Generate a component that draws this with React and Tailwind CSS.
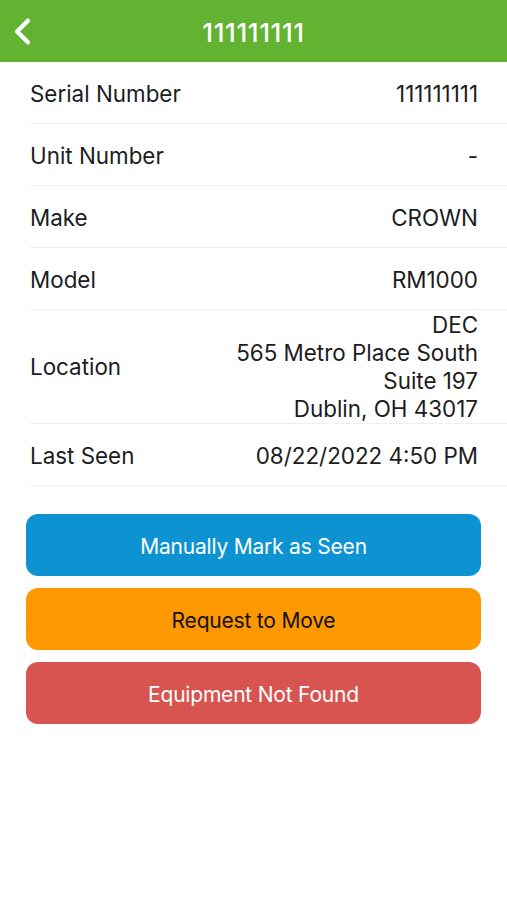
import { ChevronLeft } from 'lucide-react';

const rows = [
  { label: 'Serial Number', value: ['111111111'] },
  { label: 'Unit Number', value: ['-'] },
  { label: 'Make', value: ['CROWN'] },
  { label: 'Model', value: ['RM1000'] },
  { label: 'Location', value: ['DEC', '565 Metro Place South', 'Suite 197', 'Dublin, OH 43017'] },
  { label: 'Last Seen', value: ['08/22/2022 4:50 PM'] },
];

const buttons = [
  { text: 'Manually Mark as Seen', cls: 'bg-[#0d93d2] text-white' },
  { text: 'Request to Move', cls: 'bg-[#fe9800] text-[#111]' },
  { text: 'Equipment Not Found', cls: 'bg-[#d75450] text-white' },
];

export default function App() {
  return (
    <div className="w-[507px] h-[900px] bg-white font-['Inter',sans-serif] text-[#1c1c1e]">
      {/* Header */}
      <div className="relative h-[62px] bg-[#62b332] flex items-center justify-center">
        <ChevronLeft className="absolute left-[1px] top-[10px] text-white" size={43} strokeWidth={2.5} />
        <span className="text-white text-[26px] font-medium tracking-[0.6px] pt-[2px]">111111111</span>
      </div>

      {/* Details */}
      <div className="pl-[30px]">
        {rows.map((r) => (
          <div
            key={r.label}
            className={`flex items-center justify-between min-h-[62px] border-b border-[#efeff1] pr-[29px] text-[22.4px] ${
              r.value.length === 1 ? 'pt-[3px]' : 'pt-[1px]'
            }`}
          >
            <span>{r.label}</span>
            <div className="text-right leading-[28px]">
              {r.value.map((v) => (
                <div key={v}>{v}</div>
              ))}
            </div>
          </div>
        ))}
      </div>

      {/* Actions */}
      <div className="flex flex-col gap-[12px] px-[26px] mt-[28px]">
        {buttons.map((b) => (
          <button
            key={b.text}
            className={`h-[62px] rounded-[12px] text-[21px] tracking-[-0.2px] pt-[3px] ${b.cls}`}
          >
            {b.text}
          </button>
        ))}
      </div>
    </div>
  );
}
